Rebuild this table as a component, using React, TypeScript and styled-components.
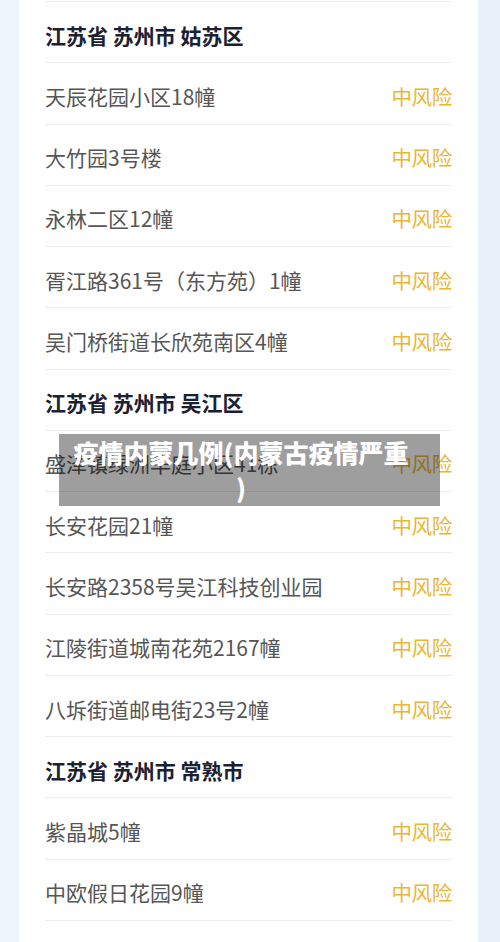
import * as React from 'react'
import styled, { createGlobalStyle } from 'styled-components'

const GlobalStyle = createGlobalStyle`
  html, body {
    margin: 0;
    padding: 0;
    background: #ecf3fb;
    font-family: "Noto Sans CJK SC", "Noto Sans", sans-serif;
  }
`

const Page = styled.div`
  position: relative;
  width: 500px;
  height: 942px;
  overflow: hidden;
  background: linear-gradient(90deg, #edf5fb 0%, #eef4fb 50%, #e9f0fa 100%);
`

const Card = styled.div`
  margin: 0 22px 0 19px;
  padding-top: 1px;
  height: 100%;
  background: #ffffff;
`

const Row = styled.div<{ $header?: boolean }>`
  box-sizing: border-box;
  height: 61.27px;
  margin: 0 26px;
  padding-top: 5px;
  border-top: 1px solid #ededed;
  display: flex;
  align-items: center;
  justify-content: space-between;
  font-size: 21px;
  color: ${p => (p.$header ? '#1b2130' : '#565656')};
  font-weight: ${p => (p.$header ? 700 : 400)};
  white-space: nowrap;
`

const Risk = styled.span`
  color: #ebb634;
  font-size: 20.5px;
  letter-spacing: -0.3px;
`

const Caption = styled.div`
  position: absolute;
  top: 434px;
  left: 59px;
  width: 381px;
  height: 72px;
  box-sizing: border-box;
  padding: 1px 26px 0 9px;
  background: rgba(0, 0, 0, 0.38);
  color: #ffffff;
  font-size: 25px;
  font-weight: 900;
  line-height: 35px;
  text-align: center;
  white-space: nowrap;
`

type Item = { name: string, header?: boolean }

const items: Item[] = [
  { name: '江苏省 苏州市 姑苏区', header: true },
  { name: '天辰花园小区18幢' },
  { name: '大竹园3号楼' },
  { name: '永林二区12幢' },
  { name: '胥江路361号（东方苑）1幢' },
  { name: '吴门桥街道长欣苑南区4幢' },
  { name: '江苏省 苏州市 吴江区', header: true },
  { name: '盛泽镇绿洲华庭小区41栋' },
  { name: '长安花园21幢' },
  { name: '长安路2358号吴江科技创业园' },
  { name: '江陵街道城南花苑2167幢' },
  { name: '八坼街道邮电街23号2幢' },
  { name: '江苏省 苏州市 常熟市', header: true },
  { name: '紫晶城5幢' },
  { name: '中欧假日花园9幢' },
]

export default function App() {
  return (
    <Page>
      <GlobalStyle />
      <Card>
        {items.map((item, i) => (
          <Row key={i} $header={item.header}>
            <span>{item.name}</span>
            {!item.header && <Risk>中风险</Risk>}
          </Row>
        ))}
        <Row />
      </Card>
      <Caption>
        疫情内蒙几例(内蒙古疫情严重
        <br />)
      </Caption>
    </Page>
  )
}
